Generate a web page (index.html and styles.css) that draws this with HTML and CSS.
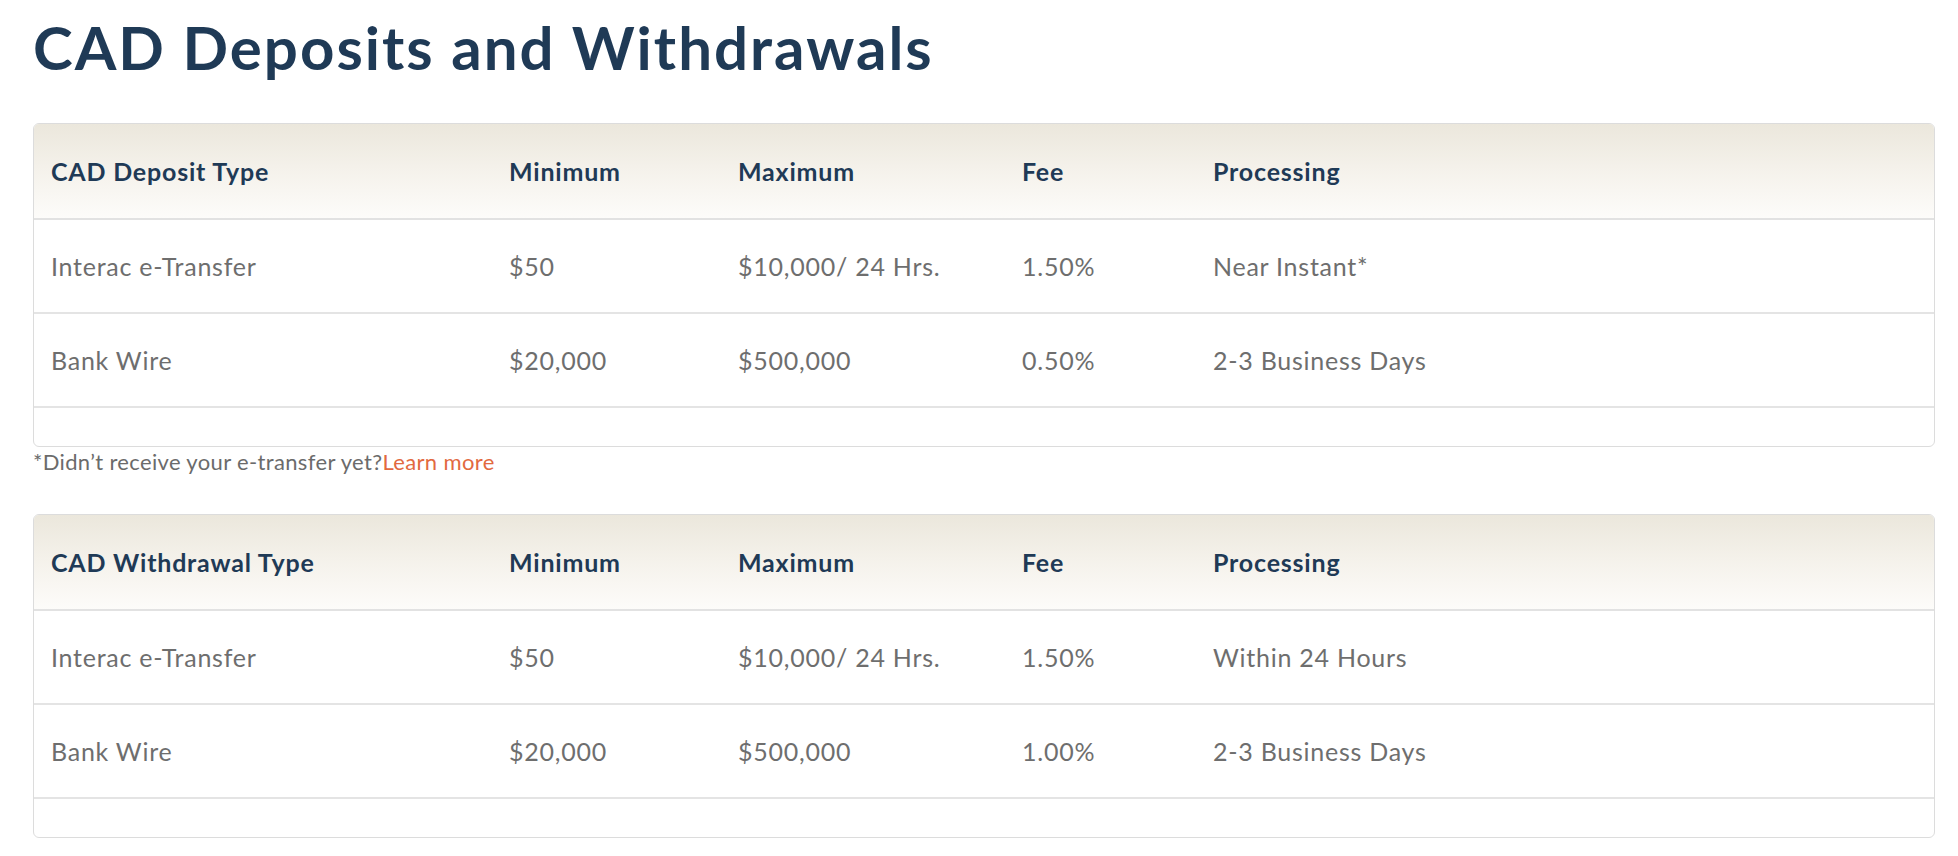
FILE: index.html
```html
<!DOCTYPE html>
<html lang="en">
<head>
<meta charset="utf-8">
<title>CAD Deposits and Withdrawals</title>
<link rel="stylesheet" href="styles.css">
</head>
<body>
<main class="page">
  <h1 class="title">CAD Deposits and Withdrawals</h1>

  <div class="table-wrap">
    <table class="rates">
      <colgroup>
        <col class="c-type"><col class="c-min"><col class="c-max"><col class="c-fee"><col class="c-proc">
      </colgroup>
      <thead>
        <tr><th>CAD Deposit Type</th><th>Minimum</th><th>Maximum</th><th>Fee</th><th>Processing</th></tr>
      </thead>
      <tbody>
        <tr><td>Interac e-Transfer</td><td>$50</td><td>$10,000/ 24 Hrs.</td><td>1.50%</td><td>Near Instant*</td></tr>
        <tr><td>Bank Wire</td><td>$20,000</td><td>$500,000</td><td>0.50%</td><td>2-3 Business Days</td></tr>
        <tr class="empty"><td colspan="5"></td></tr>
      </tbody>
    </table>
  </div>
  <p class="note">*Didn’t receive your e-transfer yet?<a href="#" class="link">Learn more</a></p>

  <div class="table-wrap second">
    <table class="rates">
      <colgroup>
        <col class="c-type"><col class="c-min"><col class="c-max"><col class="c-fee"><col class="c-proc">
      </colgroup>
      <thead>
        <tr><th>CAD Withdrawal Type</th><th>Minimum</th><th>Maximum</th><th>Fee</th><th>Processing</th></tr>
      </thead>
      <tbody>
        <tr><td>Interac e-Transfer</td><td>$50</td><td>$10,000/ 24 Hrs.</td><td>1.50%</td><td>Within 24 Hours</td></tr>
        <tr><td>Bank Wire</td><td>$20,000</td><td>$500,000</td><td>1.00%</td><td>2-3 Business Days</td></tr>
        <tr class="empty"><td colspan="5"></td></tr>
      </tbody>
    </table>
  </div>
</main>
</body>
</html>
```

FILE: styles.css
```css
* { box-sizing: border-box; }
html, body { margin: 0; padding: 0; background: #ffffff; }
body { font-family: "Lato", "Noto Sans", sans-serif; }

.page {
  padding: 11px 0 0 33px;
  width: 1935px;
}

.title {
  margin: 0 0 40px 0;
  font-size: 60px;
  line-height: 72px;
  font-weight: 700;
  letter-spacing: 2px;
  color: #1f3a56;
}

.table-wrap {
  width: 1902px;
  border: 1px solid #dcdcdc;
  border-radius: 6px;
  overflow: hidden;
}
.table-wrap.second { margin-top: 39px; }

.rates {
  width: 100%;
  border-collapse: collapse;
  table-layout: fixed;
}
.c-type { width: 458px; }
.c-min { width: 229px; }
.c-max { width: 284px; }
.c-fee { width: 191px; }
.c-proc { width: auto; }

.rates thead tr {
  background: linear-gradient(to bottom, #ebe7dc 0%, #f4f1ea 45%, #fdfcfa 100%);
}
.rates th {
  height: 95px;
  padding: 0 18px 0 17px;
  text-align: left;
  vertical-align: middle;
  font-size: 25px;
  font-weight: 700;
  letter-spacing: 0.8px;
  color: #1f3a56;
  border-bottom: 2px solid #e2e2e2;
}
.rates td {
  height: 94px;
  padding: 0 18px 0 17px;
  vertical-align: middle;
  font-size: 25px;
  font-weight: 400;
  letter-spacing: 0.75px;
  color: #6e6e6e;
  border-bottom: 2px solid #e4e4e4;
}
.rates tr.empty td {
  height: 39px;
  border-bottom: none;
}

.note {
  margin: 2px 0 0 0;
  font-size: 22px;
  line-height: 26px;
  letter-spacing: 0.35px;
  color: #6b6b6b;
}
.link {
  color: #e2693f;
  text-decoration: none;
}
```
